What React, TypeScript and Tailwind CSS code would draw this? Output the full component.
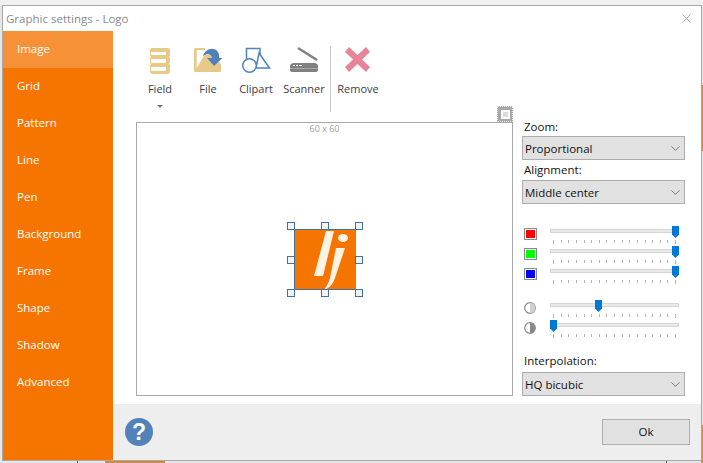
import type { ReactNode } from 'react';
import { ChevronDown, X } from 'lucide-react';

const tabs = ['Image', 'Grid', 'Pattern', 'Line', 'Pen', 'Background', 'Frame', 'Shape', 'Shadow', 'Advanced'];

function FieldIcon() {
  return (
    <svg width="30" height="28" viewBox="0 0 30 28">
      <path d="M7 2h16a2 2 0 0 1 2 2v6l-1 1 1 1v5l-1 1 1 1v6a3 3 0 0 1-2 3H7a3 3 0 0 1-2-3v-6l1-1-1-1v-5l1-1-1-1V4a2 2 0 0 1 2-2z" fill="#e8c987" />
      <rect x="6" y="6" width="15" height="3" fill="#fff" />
      <rect x="6" y="13" width="15" height="4" fill="#fff" />
      <rect x="6" y="21" width="15" height="4" fill="#fff" />
    </svg>
  );
}

function FileIcon() {
  return (
    <svg width="30" height="28" viewBox="0 0 30 28">
      <path d="M2.500 2H12v24H2.500A1.500 1.500 0 0 1 1 24.500v-21A1.500 1.500 0 0 1 2.500 2z" fill="#e8c987" />
      <path d="M3.700 4H12v4L3.700 22z" fill="#fff" />
      <path d="M12 9h7l9 9v7a1 1 0 0 1-1 1H5z" fill="#e8c987" />
      <path d="M10 10C12 3 21 0 25 6c1 2 1.500 4 1 6h3.500L21 20l-7-8h5c0-4-5-5-9-2z" fill="#4f81bd" />
    </svg>
  );
}

function ClipartIcon() {
  return (
    <svg width="30" height="28" viewBox="0 0 30 28" fill="#fff" stroke="#4f81bd" strokeWidth="1.500">
      <rect x="5.500" y="2.500" width="13.500" height="14.500" />
      <path d="M18 7l10.500 15H15z" />
      <circle cx="8.500" cy="19.500" r="6.800" />
    </svg>
  );
}

function ScannerIcon() {
  return (
    <svg width="30" height="28" viewBox="0 0 30 28">
      <path d="M9 2l19 12" stroke="#808080" strokeWidth="2.500" fill="none" />
      <path d="M1 20c0-2 2-3 4-3h20c2 0 4 1 4 3v4c0 1-1 2-2 2H3c-1 0-2-1-2-2z" fill="#808080" />
      <path d="M4 19.500h2M7 19.500h2M10 19.500h3" stroke="#fff" strokeWidth="1" />
      <path d="M1 22.500h28" stroke="#b8b8b8" strokeWidth="0.700" />
    </svg>
  );
}

function RemoveIcon() {
  return (
    <svg width="30" height="28" viewBox="0 0 30 28">
      <path d="M6 1l8.500 8L23 1l4 5-8 7.500 8 7.500-4 5-8.500-8L6 26l-4-5 8-7.500L2 6z" fill="#e8849a" />
    </svg>
  );
}

function ToolButton({ label, icon, width, arrow }: { label: string; icon: ReactNode; width: string; arrow?: boolean }) {
  return (
    <div className={`flex flex-col items-center ${width}`}>
      <div className="h-[28px] flex">{icon}</div>
      <span className="mt-[7px] text-[11px] leading-[16px] text-[#3f3a45]">{label}</span>
      {arrow && <div className="mt-[8px] w-0 h-0 border-x-[3px] border-x-transparent border-t-[3px] border-t-[#777]" />}
    </div>
  );
}

function Select({ value }: { value: string }) {
  return (
    <div className="h-[24px] w-[163px] flex items-center justify-between bg-[#e1e1e1] border border-[#adadad] pl-[2px] pr-[1px] text-[11.500px] text-[#111]">
      <span className="pt-px">{value}</span>
      <ChevronDown size={15} strokeWidth={1.200} color="#555" />
    </div>
  );
}

function Ticks() {
  return (
    <div className="h-[5px] flex justify-between items-start px-[3px] mt-[7px]">
      {Array.from({ length: 17 }).map((_, i) => (
        <div key={i} className={`w-px bg-[#b4b4b4] ${i === 0 || i === 16 ? 'h-[4px]' : 'h-[3px]'}`} />
      ))}
    </div>
  );
}

function Slider({ pos }: { pos: string }) {
  return (
    <div className="w-[129px]">
      <div className="relative h-[4px] bg-[#e7eae7] border border-[#d6d6d6]">
        <svg className={`absolute top-[-4px] ${pos}`} width="7" height="12" viewBox="0 0 7 12">
          <path d="M0 0h7v8.500L3.500 12 0 8.500z" fill="#0078d7" />
        </svg>
      </div>
      <Ticks />
    </div>
  );
}

function Swatch({ color }: { color: string }) {
  return (
    <div className="w-[13px] h-[12px] border border-[#8a8a8a] p-px bg-white">
      <div className={`w-full h-full ${color}`} />
    </div>
  );
}

function Half({ light }: { light?: boolean }) {
  return (
    <svg width="12" height="12" viewBox="0 0 12 12">
      <circle cx="6" cy="6" r="5.300" fill="#fff" stroke="#8a8a8a" strokeWidth="1.200" />
      <path d="M6 .7a5.300 5.300 0 0 1 0 10.600z" fill={light ? '#d0d0d0' : '#8a8a8a'} />
    </svg>
  );
}

function Handle({ className }: { className: string }) {
  return <div className={`absolute w-[8px] h-[8px] bg-[#f3f3f3] border border-[#41719c] ${className}`} />;
}

export default function App() {
  return (
    <div className="relative w-[703px] h-[463px] bg-[#e6e6e6] overflow-hidden" style={{ fontFamily: '"Open Sans", "Noto Sans", sans-serif' }}>
      <div className="absolute right-0 top-[85px] w-[2px] h-[66px] bg-[#d08a4a]" />
      <div className="absolute right-0 top-[425px] w-[2px] h-[38px] bg-[#d08a4a]" />
      <div className="absolute left-[105px] bottom-0 w-[60px] h-[2px] bg-[#d08a4a]" />
      <div className="absolute left-[77px] bottom-0 w-px h-[2px] bg-[#555]" />
      <div className="absolute left-[666px] bottom-0 w-px h-[2px] bg-[#555]" />
      <div className="h-[5px] bg-[#f0f0f0]" />
      <div className="relative ml-[2px] mr-[1px] h-[456px] bg-white border border-[#a8a8a8] flex flex-col">
        <div className="h-[25px] shrink-0 flex items-center justify-between pl-[3px] pr-[7px]">
          <span className="text-[11.500px] text-[#8a8a8a]">Graphic settings - Logo</span>
          <X size={15} strokeWidth={1} color="#777" />
        </div>
        <div className="flex flex-1 min-h-0">
          <div className="w-[110px] shrink-0 bg-[#f57500] flex flex-col">
            {tabs.map((t, i) => (
              <div key={t} className={`h-[37px] flex items-center pl-[14px] pb-[2px] text-[11.500px] text-white ${i === 0 ? 'bg-[#f79138]' : ''}`}>
                {t}
              </div>
            ))}
          </div>
          <div className="flex-1 flex flex-col">
            <div className="flex-1 relative pl-[23px]">
              <div className="flex items-start pt-[15px] h-[91px]">
                <ToolButton label="Field" icon={<FieldIcon />} width="w-[48px]" arrow />
                <ToolButton label="File" icon={<FileIcon />} width="w-[48px]" />
                <ToolButton label="Clipart" icon={<ClipartIcon />} width="w-[48px]" />
                <ToolButton label="Scanner" icon={<ScannerIcon />} width="w-[48px]" />
                <div className="w-px h-[66px] bg-[#c8c8c8] mx-[2px]" />
                <ToolButton label="Remove" icon={<RemoveIcon />} width="w-[50px]" />
              </div>
              <div className="flex gap-[9px]">
                <div className="relative w-[377px] h-[274px] border border-[#a8a8a8] bg-white">
                  <div className="text-center text-[9px] leading-[12px] text-[#a0a0a0]">60 x 60</div>
                  <div className="absolute left-[157px] top-[106px] w-[62px] h-[61px] bg-[#f57500] border-l border-t border-b border-[#41719c] overflow-hidden">
                    <svg width="61" height="60" viewBox="0 0 61 60">
                      <path d="M31 1h8L28 46h-9z" fill="#fff3e4" />
                      <path d="M41 18h9L40 48c-2 6-5 10-11 12 3-4 5-8 6-12z" fill="#fff3e4" />
                      <ellipse cx="48" cy="8" rx="5" ry="4" fill="#fff3e4" />
                    </svg>
                  </div>
                  <Handle className="left-[150px] top-[99px]" />
                  <Handle className="left-[184px] top-[99px]" />
                  <Handle className="left-[218px] top-[99px]" />
                  <Handle className="left-[150px] top-[133px]" />
                  <Handle className="left-[218px] top-[133px]" />
                  <Handle className="left-[150px] top-[166px]" />
                  <Handle className="left-[184px] top-[166px]" />
                  <Handle className="left-[218px] top-[166px]" />
                </div>
                <div className="w-[163px] flex flex-col text-[11.500px] text-[#111]">
                  <span className="leading-[16px] mt-[-3px] mb-[1px] pl-[2px]">Zoom:</span>
                  <Select value="Proportional" />
                  <span className="leading-[16px] mt-[2px] mb-[2px] pl-[2px]">Alignment:</span>
                  <Select value="Middle center" />
                  <div className="mt-[25px] flex flex-col gap-[4px]">
                    {['bg-[#ff0000]', 'bg-[#00ff00]', 'bg-[#0000ff]'].map((c) => (
                      <div key={c} className="flex items-start">
                        <div className="w-[26px] ml-[2px] mt-[-1px]"><Swatch color={c} /></div>
                        <Slider pos="left-[121px]" />
                      </div>
                    ))}
                  </div>
                  <div className="mt-[18px] flex flex-col gap-[4px]">
                    <div className="flex items-start">
                      <div className="w-[26px] ml-[2px] mt-[-1px]"><Half light /></div>
                      <Slider pos="left-[44px]" />
                    </div>
                    <div className="flex items-start">
                      <div className="w-[26px] ml-[2px] mt-[-1px]"><Half /></div>
                      <Slider pos="left-[-1px]" />
                    </div>
                  </div>
                  <span className="leading-[16px] mt-[14px] mb-[3px] pl-[2px]">Interpolation:</span>
                  <Select value="HQ bicubic" />
                </div>
              </div>
              <div className="absolute left-[384px] top-[75px] w-[16px] h-[16px] bg-[#a8a8a8] border border-dotted border-[#e8e8e8] flex items-center justify-center">
                <div className="w-[9px] h-[9px] bg-[#dcdcdc] border-2 border-white" />
              </div>
            </div>
            <div className="h-[56px] shrink-0 bg-[#eeeeee] flex items-center justify-between pl-[12px] pr-[11px]">
              <svg width="28" height="28" viewBox="0 0 28 28">
                <circle cx="14" cy="14" r="14" fill="#5381b9" />
                <text x="14" y="22" textAnchor="middle" fontSize="23" fontWeight="700" fill="#fff" fontFamily="Liberation Sans">?</text>
              </svg>
              <div className="w-[88px] h-[26px] bg-[#e1e1e1] border border-[#adadad] flex items-center justify-center text-[11.500px] text-[#111]">Ok</div>
            </div>
          </div>
        </div>
      </div>
    </div>
  );
}
